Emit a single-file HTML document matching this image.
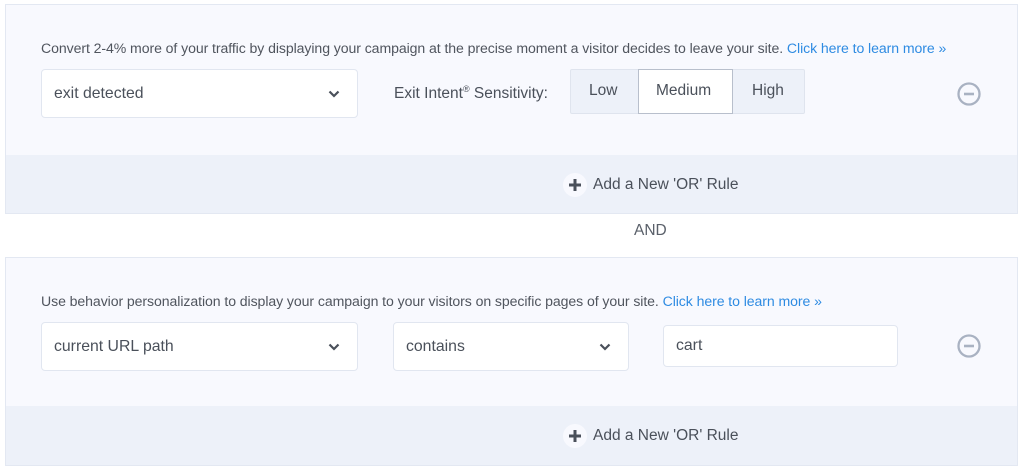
<!DOCTYPE html>
<html><head><style>
*{margin:0;padding:0;box-sizing:border-box}
body{width:1024px;height:472px;background:#fff;font-family:"Liberation Sans",sans-serif;color:#505866;position:relative;overflow:hidden}
.a{position:absolute}
.panel{position:absolute;left:5px;width:1013px;background:#f8f9fe;border:1px solid #e3e8f2}
.band{position:absolute;left:0;right:0;bottom:0;background:#edf1f9}
.intro{font-size:14.1px;color:#50555e;white-space:nowrap;letter-spacing:-0.08px}
.intro span{color:#2e8be2}
.sel{position:absolute;background:#fff;border:1px solid #e1e6f0;border-radius:4px;font-size:15.8px;color:#4a505a;padding-left:12px;display:flex;align-items:center}
.chev{position:absolute;right:17px;top:50%;margin-top:-4px}
.minus{position:absolute}
.add{position:absolute;font-size:15.5px;color:#4a505a;display:flex;align-items:center}
.plus{width:24px;height:24px;border-radius:50%;background:#f8f9fe;display:flex;align-items:center;justify-content:center;margin-right:6px}
.t{font-size:15.5px;color:#4a505a}
</style></head><body>

<div class="panel" style="top:4px;height:210px">
 <div class="band" style="height:58px"></div>
</div>
<div class="a intro" style="left:41px;top:40px">Convert 2-4% more of your traffic by displaying your campaign at the precise moment a visitor decides to leave your site. <span>Click here to learn more »</span></div>
<div class="sel" style="left:41px;top:69px;width:317px;height:49px">exit detected
 <svg class="chev" width="12" height="8" viewBox="0 0 12 8"><path d="M1.5 1.5 6 6 10.5 1.5" fill="none" stroke="#4a505a" stroke-width="2.2"/></svg></div>
<div class="a t" style="left:394px;top:84px">Exit Intent<sup style="font-size:9px">®</sup> Sensitivity:</div>
<div class="a" style="left:570px;top:69px;width:235px;height:45px;background:#edf1f9;border:1px solid #dfe4ee;border-radius:2px"></div>
<div class="a" style="left:638px;top:69px;width:95px;height:45px;background:#fff;border:1px solid #b8bfcc"></div>
<div class="a t" style="left:589px;top:82px">Low</div>
<div class="a t" style="left:656px;top:82px">Medium</div>
<div class="a t" style="left:752px;top:82px">High</div>
<svg class="minus" style="left:957px;top:82px" width="24" height="24" viewBox="0 0 24 24"><circle cx="12" cy="12" r="10.5" fill="none" stroke="#a9b2c2" stroke-width="2.3"/><path d="M7 12h10" stroke="#a9b2c2" stroke-width="2.6"/></svg>
<div class="add" style="left:563px;top:173px"><div class="plus"><svg width="12" height="12" viewBox="0 0 12 12"><path d="M6 0v12M0 6h12" stroke="#4a505a" stroke-width="3"/></svg></div>Add a New 'OR' Rule</div>

<div class="a t" style="left:634px;top:222px;color:#5a606a">AND</div>

<div class="panel" style="top:257px;height:209px">
 <div class="band" style="height:59px"></div>
</div>
<div class="a intro" style="left:41px;top:293px">Use behavior personalization to display your campaign to your visitors on specific pages of your site. <span>Click here to learn more »</span></div>
<div class="sel" style="left:41px;top:322px;width:317px;height:49px">current URL path
 <svg class="chev" width="12" height="8" viewBox="0 0 12 8"><path d="M1.5 1.5 6 6 10.5 1.5" fill="none" stroke="#4a505a" stroke-width="2.2"/></svg></div>
<div class="sel" style="left:393px;top:322px;width:236px;height:49px">contains
 <svg class="chev" width="12" height="8" viewBox="0 0 12 8"><path d="M1.5 1.5 6 6 10.5 1.5" fill="none" stroke="#4a505a" stroke-width="2.2"/></svg></div>
<div class="sel" style="left:663px;top:325px;width:235px;height:42px">cart</div>
<svg class="minus" style="left:957px;top:334px" width="24" height="24" viewBox="0 0 24 24"><circle cx="12" cy="12" r="10.5" fill="none" stroke="#a9b2c2" stroke-width="2.3"/><path d="M7 12h10" stroke="#a9b2c2" stroke-width="2.6"/></svg>
<div class="add" style="left:563px;top:424px"><div class="plus"><svg width="12" height="12" viewBox="0 0 12 12"><path d="M6 0v12M0 6h12" stroke="#4a505a" stroke-width="3"/></svg></div>Add a New 'OR' Rule</div>

</body></html>
